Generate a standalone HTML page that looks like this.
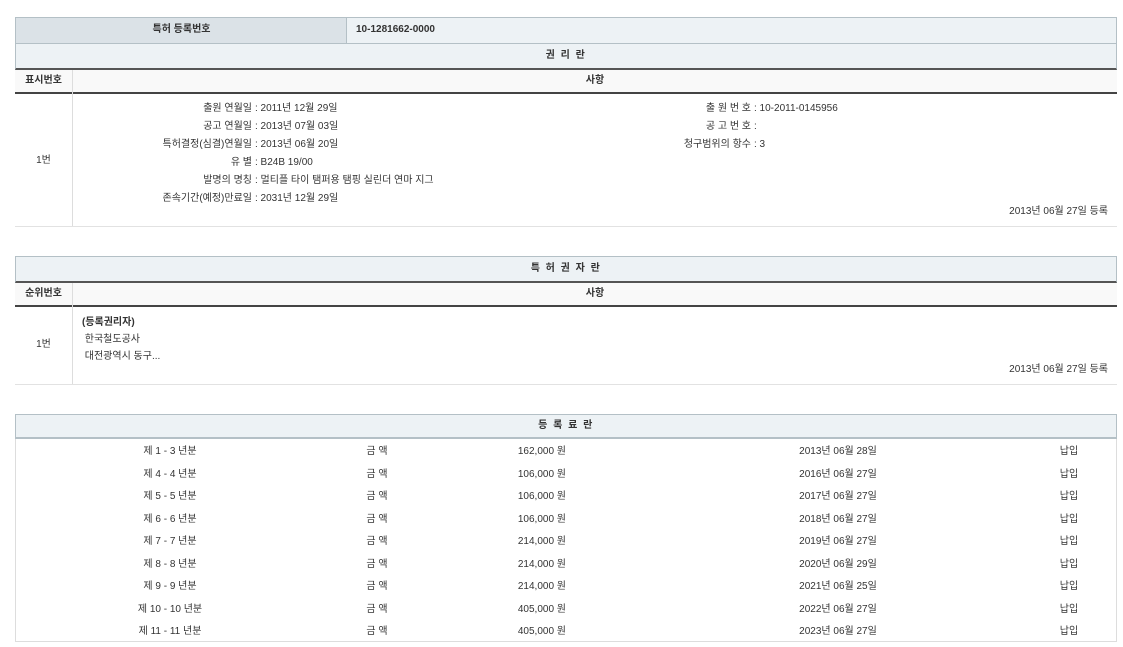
<!DOCTYPE html>
<html><head><meta charset="utf-8"><style>
*{margin:0;padding:0;box-sizing:border-box}
body{width:1123px;height:647px;background:#fff;position:relative;overflow:hidden;font-family:"Liberation Sans","Noto Sans CJK KR",sans-serif;font-size:10px;color:#333}
.a{position:absolute}
.t{position:absolute;white-space:nowrap;line-height:12px}
.b{font-weight:bold}
.c{text-align:center}
.r{text-align:right}
</style></head><body>
<!-- table 1 -->
<div class="a" style="left:15px;top:17px;width:1102px;height:27px;border:1px solid #b4c0c6;background:#edf2f5"></div>
<div class="a" style="left:16px;top:18px;width:331px;height:25px;background:#dbe2e7;border-right:1px solid #b4c0c6"></div>
<div class="t b c" style="left:16px;top:24px;width:331px">특허 등록번호</div>
<div class="t b" style="left:356px;top:24px">10-1281662-0000</div>
<div class="a" style="left:15px;top:43px;width:1102px;height:27px;border:1px solid #b4c0c6;border-bottom:2px solid #555;background:#edf2f5"></div>
<div class="t b c" style="left:15px;top:50px;width:1102px;letter-spacing:1.5px">권 리 란</div>
<div class="a" style="left:15px;top:70px;width:1102px;height:24px;background:#f9f9f9;border-bottom:2px solid #444"></div>
<div class="a" style="left:72px;top:70px;width:1px;height:157px;background:#ddd"></div>
<div class="t b c" style="left:15px;top:75px;width:57px">표시번호</div>
<div class="t b c" style="left:73px;top:75px;width:1044px">사항</div>
<div class="a" style="left:15px;top:226px;width:1102px;height:1px;background:#e2e2e2"></div>
<div class="t c" style="left:15px;top:155px;width:57px">1번</div>
<div class="t r" style="left:100px;top:100px;width:152px;line-height:18px">출원 연월일<br>공고 연월일<br>특허결정(심결)연월일<br>유 별<br>발명의 명칭<br>존속기간(예정)만료일</div>
<div class="t" style="left:255px;top:100px;line-height:18px">: 2011년 12월 29일<br>: 2013년 07월 03일<br>: 2013년 06월 20일<br>: B24B 19/00<br>: 멀티플 타이 탬퍼용 탬핑 실린더 연마 지그<br>: 2031년 12월 29일</div>
<div class="t r" style="left:600px;top:100px;width:151px;line-height:18px">출 원 번 호<br>공 고 번 호<br>청구범위의 항수</div>
<div class="t" style="left:754px;top:100px;line-height:18px">: 10-2011-0145956<br>:<br>: 3</div>
<div class="t r" style="left:900px;top:206px;width:208px">2013년 06월 27일 등록</div>
<!-- table 2 -->
<div class="a" style="left:15px;top:256px;width:1102px;height:27px;border:1px solid #b4c0c6;border-bottom:2px solid #555;background:#edf2f5"></div>
<div class="t b c" style="left:15px;top:263px;width:1102px;letter-spacing:1.5px">특 허 권 자 란</div>
<div class="a" style="left:15px;top:283px;width:1102px;height:24px;background:#f9f9f9;border-bottom:2px solid #444"></div>
<div class="a" style="left:72px;top:283px;width:1px;height:101px;background:#ddd"></div>
<div class="t b c" style="left:15px;top:288px;width:57px">순위번호</div>
<div class="t b c" style="left:73px;top:288px;width:1044px">사항</div>
<div class="a" style="left:15px;top:384px;width:1102px;height:1px;background:#e2e2e2"></div>
<div class="t c" style="left:15px;top:339px;width:57px">1번</div>
<div class="t" style="left:82px;top:314px;line-height:17px"><b>(등록권리자)</b><br>&nbsp;한국철도공사<br>&nbsp;대전광역시 동구...</div>
<div class="t r" style="left:900px;top:364px;width:208px">2013년 06월 27일 등록</div>
<!-- table 3 -->
<div class="a" style="left:15px;top:414px;width:1102px;height:228px;border:1px solid #ddd;border-top:1px solid #b4c0c6"></div>
<div class="a" style="left:15px;top:414px;width:1102px;height:25px;border:1px solid #b4c0c6;border-bottom:2px solid #b4c0c6;background:#edf2f5"></div>
<div class="t b c" style="left:15px;top:420px;width:1102px;letter-spacing:1.5px">등 록 료 란</div>
<div class="t c" style="left:70px;top:441px;width:200px;line-height:22.5px">제 1 - 3 년분<br>제 4 - 4 년분<br>제 5 - 5 년분<br>제 6 - 6 년분<br>제 7 - 7 년분<br>제 8 - 8 년분<br>제 9 - 9 년분<br>제 10 - 10 년분<br>제 11 - 11 년분</div>
<div class="t c" style="left:347px;top:441px;width:60px;line-height:22.5px">금 액<br>금 액<br>금 액<br>금 액<br>금 액<br>금 액<br>금 액<br>금 액<br>금 액</div>
<div class="t r" style="left:466px;top:441px;width:100px;line-height:22.5px">162,000 원<br>106,000 원<br>106,000 원<br>106,000 원<br>214,000 원<br>214,000 원<br>214,000 원<br>405,000 원<br>405,000 원</div>
<div class="t c" style="left:758px;top:441px;width:160px;line-height:22.5px">2013년 06월 28일<br>2016년 06월 27일<br>2017년 06월 27일<br>2018년 06월 27일<br>2019년 06월 27일<br>2020년 06월 29일<br>2021년 06월 25일<br>2022년 06월 27일<br>2023년 06월 27일</div>
<div class="t c" style="left:1039px;top:441px;width:60px;line-height:22.5px">납입<br>납입<br>납입<br>납입<br>납입<br>납입<br>납입<br>납입<br>납입</div>
</body></html>
